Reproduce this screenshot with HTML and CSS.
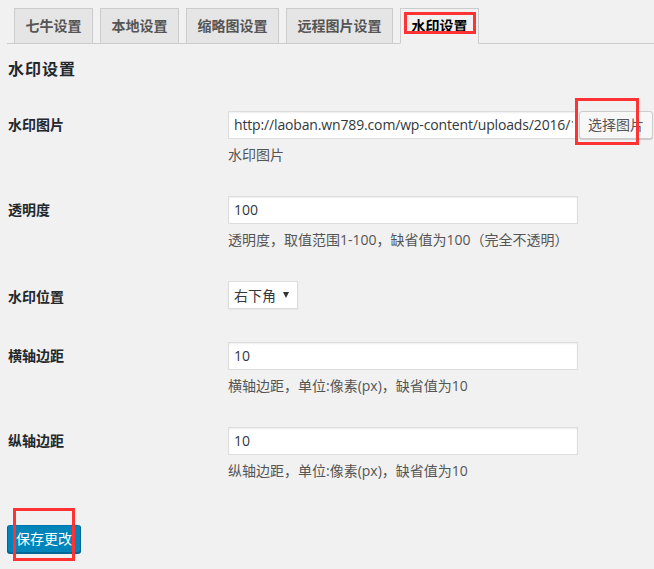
FILE: index.html
```html
<!DOCTYPE html>
<html lang="zh-CN">
<head>
<meta charset="utf-8">
<title>水印设置</title>
<link rel="stylesheet" href="styles.css">
</head>
<body>
<div class="wrap">
  <nav class="tabs">
    <a class="tab">七牛设置</a>
    <a class="tab">本地设置</a>
    <a class="tab">缩略图设置</a>
    <a class="tab">远程图片设置</a>
    <a class="tab active">水印设置</a>
  </nav>

  <h2 class="title">水印设置</h2>

  <div class="form">
    <div class="row">
      <div class="label">水印图片</div>
      <div class="field">
        <div class="inline">
          <div class="input url"><span class="clip">http://laoban.wn789.com/wp-content/uploads/2016/11</span></div>
          <button class="btn">选择图片</button>
        </div>
        <p class="desc">水印图片</p>
      </div>
    </div>

    <div class="row">
      <div class="label">透明度</div>
      <div class="field">
        <div class="input">100</div>
        <p class="desc">透明度，取值范围1-100，缺省值为100（完全不透明）</p>
      </div>
    </div>

    <div class="row row-select">
      <div class="label label-select">水印位置</div>
      <div class="field">
        <div class="select"><span>右下角</span><span class="arrow"></span></div>
      </div>
    </div>

    <div class="row">
      <div class="label">横轴边距</div>
      <div class="field">
        <div class="input">10</div>
        <p class="desc">横轴边距，单位:像素(px)，缺省值为10</p>
      </div>
    </div>

    <div class="row">
      <div class="label">纵轴边距</div>
      <div class="field">
        <div class="input">10</div>
        <p class="desc">纵轴边距，单位:像素(px)，缺省值为10</p>
      </div>
    </div>
  </div>

  <div class="submit">
    <button class="btn-primary">保存更改</button>
  </div>

  <div class="mark mark-tab"></div>
  <div class="mark mark-btn"></div>
  <div class="mark mark-save"></div>
</div>
</body>
</html>
```

FILE: styles.css
```css
html, body {
  margin: 0;
  padding: 0;
  background: #f1f1f1;
}

body {
  font-family: "Open Sans", "Noto Sans CJK SC", sans-serif;
  font-size: 14px;
  color: #444;
  width: 654px;
  height: 569px;
  overflow: hidden;
}

.wrap {
  position: relative;
  padding-top: 8px;
}

/* tabs */
.tabs {
  display: flex;
  margin-left: 7px;
  border-bottom: 1px solid #ccc;
  height: 35px;
}

.tab {
  display: block;
  box-sizing: border-box;
  height: 35px;
  margin-left: 7px;
  padding: 5px 10.5px;
  line-height: 24px;
  border: 1px solid #ccc;
  border-bottom: none;
  background: #e5e5e5;
  color: #555;
  font-weight: 600;
  font-size: 14px;
  white-space: nowrap;
}

.tab.active {
  background: #f1f1f1;
  color: #000;
  height: 36px;
  border-bottom: 1px solid #f1f1f1;
}

/* heading */
.title {
  margin: 15px 0 16px 8px;
  font-size: 16px;
  line-height: 20px;
  font-weight: 600;
  letter-spacing: 1px;
  color: #23282d;
}

/* form rows */
.row {
  display: flex;
  padding: 16px 0 15px 8px;
}

.row-select {
  padding-bottom: 17px;
}

.label {
  width: 220px;
  flex: none;
  padding-top: 4px;
  line-height: 20px;
  font-weight: 600;
  color: #23282d;
}

.label-select {
  padding-top: 6px;
}

.field {
  flex: 1;
  min-width: 0;
}

.inline {
  display: flex;
  align-items: flex-start;
}

.input {
  box-sizing: border-box;
  width: 350px;
  height: 28px;
  padding: 0 5px;
  line-height: 26px;
  background: #fff;
  border: 1px solid #ddd;
  box-shadow: inset 0 1px 2px rgba(0, 0, 0, 0.07);
  color: #32373c;
  white-space: nowrap;
  overflow: hidden;
  flex: none;
}

.url {
  letter-spacing: -0.15px;
}

.clip {
  display: block;
  width: 339px;
  overflow: hidden;
}

.btn {
  box-sizing: border-box;
  margin-left: 1px;
  height: 28px;
  padding: 0 8px;
  background: #f7f7f7;
  border: 1px solid #ccc;
  border-radius: 3px;
  box-shadow: 0 1px 0 #ccc;
  color: #555;
  font-family: "Open Sans", "Noto Sans CJK SC", sans-serif;
  font-size: 14px;
  line-height: 26px;
  white-space: nowrap;
  flex: none;
}

.desc {
  margin: 6px 0 0;
  line-height: 20px;
  color: #555;
}

.select {
  box-sizing: border-box;
  display: flex;
  align-items: center;
  width: 70px;
  height: 28px;
  padding: 0 5px;
  background: #fff;
  border: 1px solid #ddd;
  box-shadow: 0 1px 2px rgba(0, 0, 0, 0.05);
  color: #32373c;
}

.select .arrow {
  margin-left: auto;
  margin-right: 3px;
  width: 0;
  height: 0;
  border-left: 3px solid transparent;
  border-right: 3px solid transparent;
  border-top: 6px solid #333;
}

/* submit */
.submit {
  margin: 29px 0 0 7px;
}

.btn-primary {
  box-sizing: border-box;
  height: 28px;
  padding: 0 8px;
  background: #0085ba;
  border: 1px solid #0073aa;
  border-color: #0073aa #006799 #006799;
  border-radius: 3px;
  box-shadow: 0 1px 0 #006799;
  color: #fff;
  font-family: "Open Sans", "Noto Sans CJK SC", sans-serif;
  font-size: 14px;
  line-height: 26px;
}

/* red annotation boxes */
.mark {
  position: absolute;
  box-sizing: border-box;
  border: 3px solid #f33;
}

.mark-tab {
  left: 404px;
  top: 12px;
  width: 72px;
  height: 22px;
}

.mark-btn {
  left: 575px;
  top: 98px;
  width: 64px;
  height: 47px;
}

.mark-save {
  left: 13px;
  top: 508px;
  width: 62px;
  height: 53px;
}
```
